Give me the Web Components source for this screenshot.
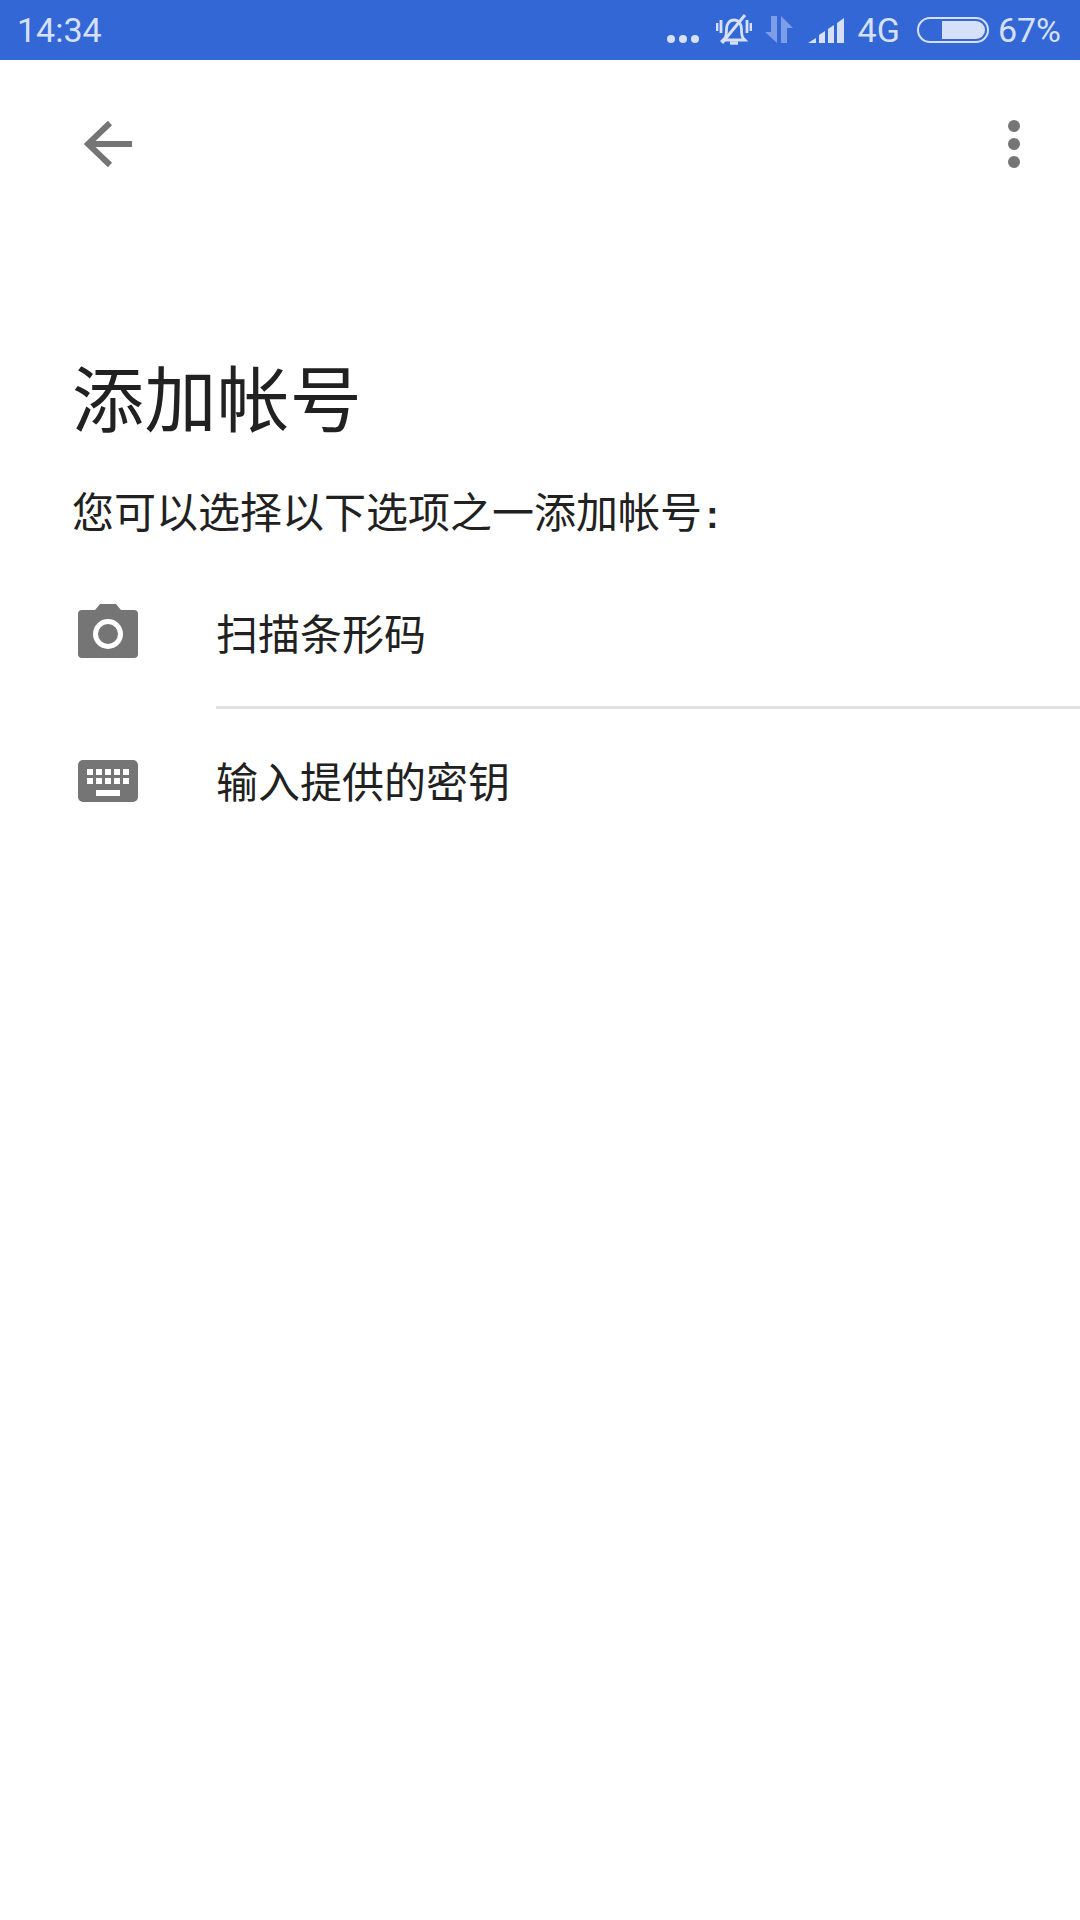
<!DOCTYPE html>
<html lang="zh">
<head>
<meta charset="utf-8">
<title>添加帐号</title>
<style>
html, body { margin: 0; padding: 0; background: #fff; }
body { width: 1080px; height: 1920px; overflow: hidden; font-family: "Noto Sans CJK SC", "Liberation Sans", sans-serif; }
</style>
</head>
<body>
<status-bar></status-bar>
<tool-bar></tool-bar>
<page-heading title-text="添加帐号" sub-text="您可以选择以下选项之一添加帐号"></page-heading>
<option-row icon="camera" divider>扫描条形码</option-row>
<option-row icon="keyboard">输入提供的密钥</option-row>

<script>
customElements.define('status-bar', class extends HTMLElement {
  constructor() {
    super()
    this.attachShadow({ mode: 'open' }).innerHTML = `
<style>
:host { display: flex; align-items: center; height: 60px; padding: 0 19px 0 17px; background: #3367d6; color: #d6e0f8; font: 34px Roboto, sans-serif; box-sizing: border-box; }
.time { flex: 1; }
.right { display: flex; align-items: center; }
svg { display: block; }
.net { margin-left: 13px; }
.pct { margin-left: 9px; }
</style>
<span class="time">14:34</span>
<div class="right">
  <svg width="32" height="10" viewBox="0 0 32 10" style="margin-top:18px"><circle cx="4" cy="5" r="4" fill="#d6e0f8"/><circle cx="16" cy="5" r="4" fill="#d6e0f8"/><circle cx="28" cy="5" r="4" fill="#d6e0f8"/></svg>
  <svg width="36" height="32" viewBox="0 0 36 32" style="margin-left:17px" fill="none" stroke="#d6e0f8" stroke-width="2.8"><path d="M9 24c1.500-2 1.500-5 1.500-9 0-5 3-9 7.500-9s7.500 4 7.500 9c0 4 0 7 1.500 9l2 2H7z"/><path d="M14 29h8" stroke-width="3.400"/><path d="M1 9v8M5 6v13M31 6v13M35 9v8"/><path d="M29 1L6 29" stroke-width="3"/></svg>
  <svg width="28" height="28" viewBox="0 0 28 28" style="margin-left:13px" fill="#7d9de6"><path d="M6 0h6v27L0 16h6zM16 0l12 12h-6v15h-6z"/></svg>
  <svg width="37" height="26" viewBox="0 0 37 26" style="margin-left:15px" fill="#d6e0f8"><path d="M0 26l8-5v5zM11 26v-8l6-4v12zM20 26V12l6-4v18zM29 26V6l7-5v25z"/></svg>
  <span class="net">4G</span>
  <svg width="72" height="26" viewBox="0 0 72 26" style="margin-left:17px"><rect x="1" y="1" width="70" height="24" rx="12" fill="none" stroke="#d6e0f8" stroke-width="2"/><path d="M25 4h34a9 9 0 0 1 9 9a9 9 0 0 1-9 9H25z" fill="#d6e0f8"/></svg>
  <span class="pct">67%</span>
</div>`
  }
})

customElements.define('tool-bar', class extends HTMLElement {
  constructor() {
    super()
    this.attachShadow({ mode: 'open' }).innerHTML = `
<style>
:host { display: flex; justify-content: space-between; align-items: center; height: 168px; padding: 0 60px 0 84px; box-sizing: border-box; }
svg { display: block; }
</style>
<svg width="48" height="48" viewBox="0 0 48 48" fill="none" stroke="#757575" stroke-width="6"><path d="M48 24H4M26 3L4 24l22 21"/></svg>
<svg width="12" height="48" viewBox="0 0 12 48" fill="#757575"><circle cx="6" cy="6" r="6"/><circle cx="6" cy="24" r="6"/><circle cx="6" cy="42" r="6"/></svg>`
  }
})

customElements.define('page-heading', class extends HTMLElement {
  constructor() {
    super()
    this.attachShadow({ mode: 'open' }).innerHTML = `
<style>
:host { display: block; height: 333px; padding: 126px 0 0 72px; box-sizing: border-box; color: #212121; font-family: "Noto Sans CJK SC", sans-serif; }
h1 { margin: 0; font-size: 72px; font-weight: 400; line-height: 82px; letter-spacing: 0.6px; }
p { margin: 44px 0 0; font-size: 42px; line-height: 60px; }
b { display: inline-block; margin-left: 4px; font-family: "Liberation Sans", sans-serif; font-size: 38px; font-weight: 700; }
</style>
<h1></h1>
<p><span></span><b>:</b></p>`
  }
  connectedCallback() {
    this.shadowRoot.querySelector('h1').textContent = this.getAttribute('title-text')
    this.shadowRoot.querySelector('p span').textContent = this.getAttribute('sub-text')
  }
})

const optionIcons = {
  camera: `<svg width="60" height="54" viewBox="0 0 60 54"><path fill="#757575" fill-rule="evenodd" d="M4 6h13l5-6h16l5 6h13a4 4 0 0 1 4 4v40a4 4 0 0 1-4 4H4a4 4 0 0 1-4-4V10a4 4 0 0 1 4-4zM30 15a15 15 0 1 0 0 30a15 15 0 1 0 0-30zM30 20a10 10 0 1 1 0 20a10 10 0 1 1 0-20z"/></svg>`,
  keyboard: `<svg width="60" height="42" viewBox="0 0 60 42"><path fill="#757575" fill-rule="evenodd" d="M5 0h50a5 5 0 0 1 5 5v32a5 5 0 0 1-5 5H5a5 5 0 0 1-5-5V5a5 5 0 0 1 5-5zM9 9v6h6V9zM18 9v6h6V9zM27 9v6h6V9zM36 9v6h6V9zM45 9v6h6V9zM9 18v6h6v-6zM18 18v6h6v-6zM27 18v6h6v-6zM36 18v6h6v-6zM45 18v6h6v-6zM18 30v6h24v-6z"/></svg>`
}

customElements.define('option-row', class extends HTMLElement {
  constructor() {
    super()
    this.attachShadow({ mode: 'open' }).innerHTML = `
<style>
:host { display: grid; grid-template-columns: 60px 1fr; column-gap: 78px; align-items: center; height: 144px; padding-left: 78px; box-sizing: border-box; color: #212121; font-size: 42px; }
:host([divider]) { height: 148px; padding-bottom: 4px; border-bottom: 3px solid; border-image: linear-gradient(to right, transparent 217px, #e0e0e0 217px) 1; }
:host([divider]) .icon { margin-top: -2px; }
.icon svg { display: block; }
.text { line-height: 60px; margin-top: -2px; }
:host([divider]) .text { margin-top: 0; }
</style>
<div class="icon"></div>
<div class="text"><slot></slot></div>`
  }
  connectedCallback() {
    this.shadowRoot.querySelector('.icon').innerHTML = optionIcons[this.getAttribute('icon')]
  }
})
</script>
</body>
</html>
